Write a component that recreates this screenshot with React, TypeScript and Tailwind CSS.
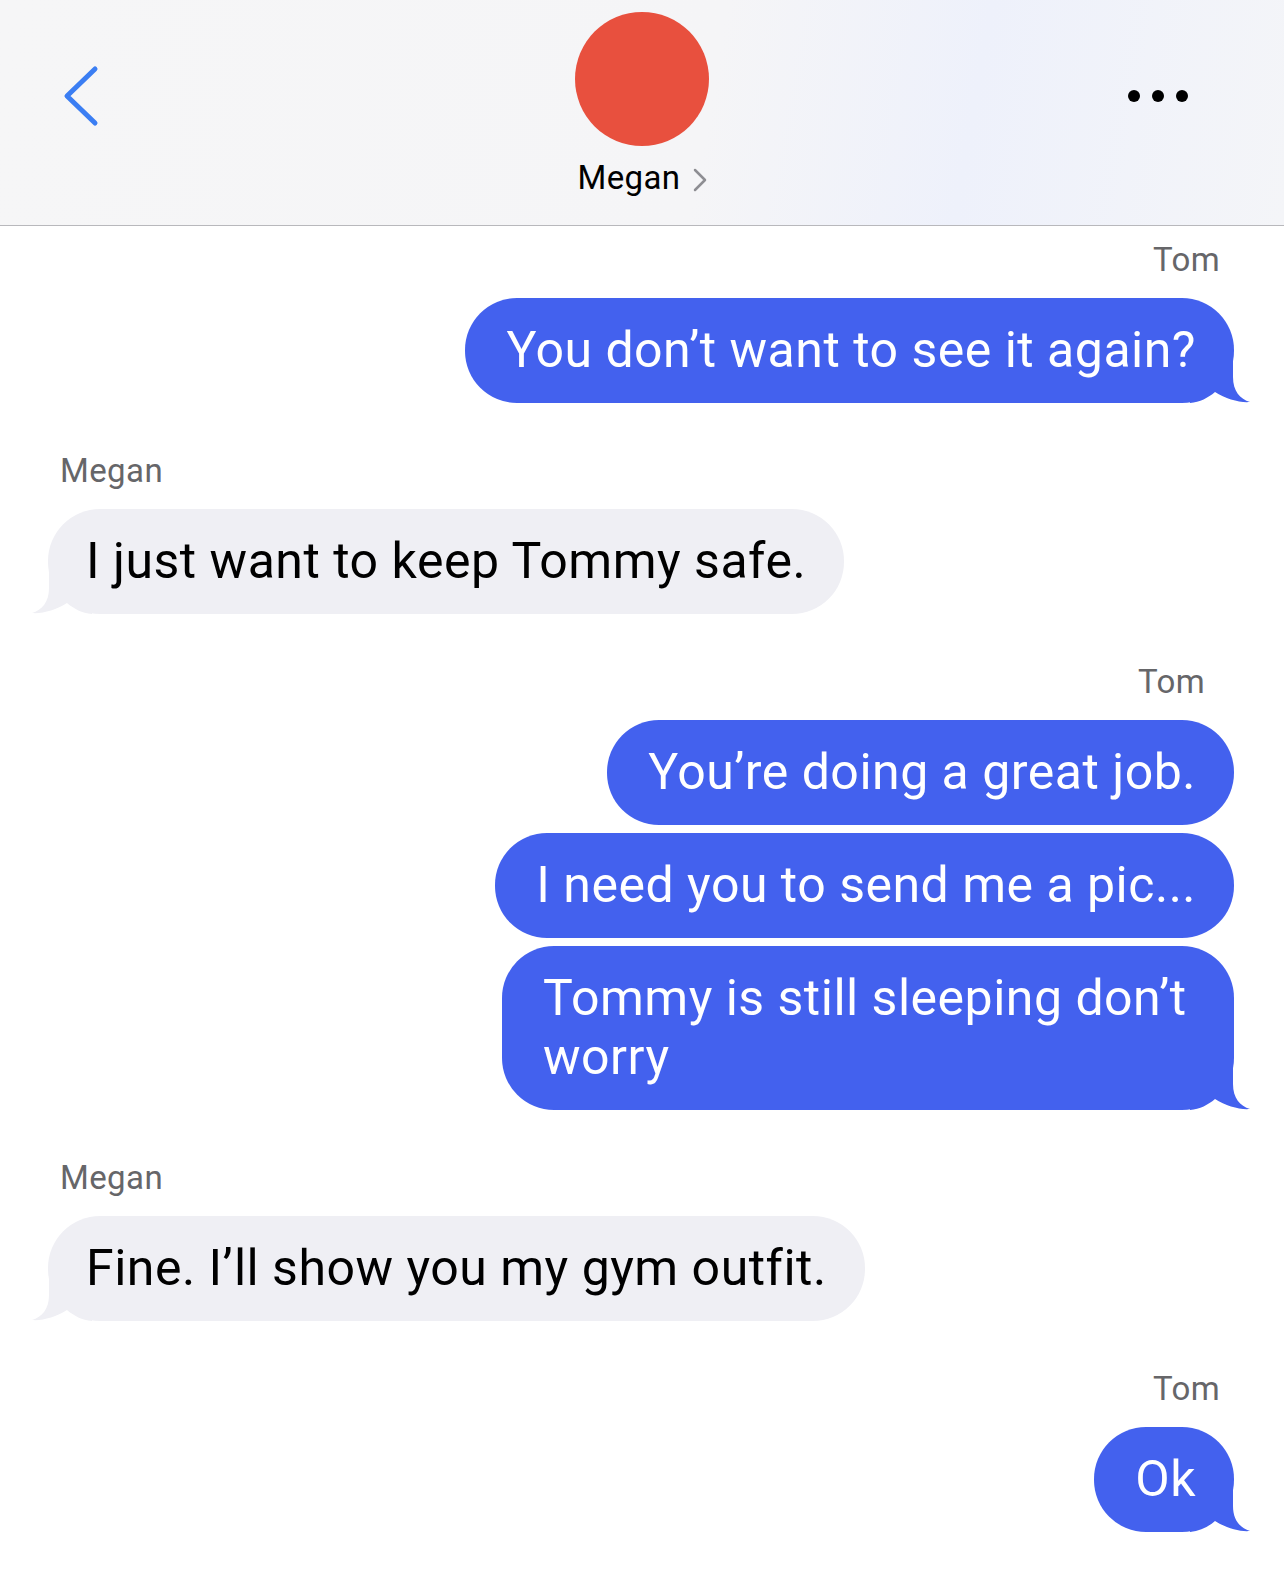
import React from "react";

type Msg = { text: string; width?: string };
type Group = { from: "Tom" | "Megan"; msgs: Msg[]; labelPad?: string };

const groups: Group[] = [
  { from: "Tom", msgs: [{ text: "You don’t want to see it again?" }] },
  { from: "Megan", msgs: [{ text: "I just want to keep Tommy safe." }] },
  {
    from: "Tom",
    labelPad: "pr-[79px]",
    msgs: [
      { text: "You’re doing a great job." },
      { text: "I need you to send me a pic..." },
      { text: "Tommy is still sleeping don’t worry", width: "w-[732px]" },
    ],
  },
  { from: "Megan", msgs: [{ text: "Fine. I’ll show you my gym outfit." }] },
  { from: "Tom", msgs: [{ text: "Ok" }] },
];

// bubble tail, drawn over the lower corner of the last bubble in a group
const Tail = ({ side, color }: { side: "left" | "right"; color: string }) => (
  <svg
    width="60"
    height="50"
    viewBox="0 0 60 50"
    className={
      side === "right"
        ? "absolute bottom-0 right-[-16px]"
        : "absolute bottom-0 left-[-16px] -scale-x-100"
    }
  >
    <path
      d="M43 0 V24 C43 38 50 46 60 49 C50 50 36 46 25 39 C18 45 10 49 0 50 V0 Z"
      fill={color}
    />
  </svg>
);

const Bubble = ({ msg, sent, last }: { msg: Msg; sent: boolean; last: boolean }) => (
  <div
    className={
      "relative max-w-[830px] rounded-[52px] py-[23px] text-[50px] leading-[59px] tracking-[0.5px] " +
      (msg.width ?? "") +
      " " +
      (sent
        ? "bg-[#4361ee] text-white pl-[41px] pr-[38px]"
        : "bg-[#efeff4] text-black pl-[38px] pr-[38px]")
    }
  >
    {last && <Tail side={sent ? "right" : "left"} color={sent ? "#4361ee" : "#efeff4"} />}
    <span className="relative">{msg.text}</span>
  </div>
);

export default function App() {
  return (
    <div
      className="w-[1284px] min-h-[1569px] bg-white overflow-hidden"
      style={{ fontFamily: "Roboto, 'Liberation Sans', sans-serif" }}
    >
      <header className="h-[226px] border-b border-[#b8b8bc] bg-[linear-gradient(100deg,#f6f6f7_0%,#f5f5f7_55%,#eef1fb_75%,#f4f5f8_100%)]">
        <div className="grid h-full grid-cols-[1fr_auto_1fr] items-start px-[62px]">
          <svg width="40" height="64" viewBox="0 0 40 64" className="mt-[64px]">
            <polyline
              points="33,5 5,32 33,59"
              fill="none"
              stroke="#3b7ef3"
              strokeWidth="5"
              strokeLinecap="round"
              strokeLinejoin="round"
            />
          </svg>
          <div className="flex flex-col items-center pt-[12px]">
            <div className="h-[134px] w-[134px] rounded-full bg-[#e8503e]" />
            <div className="mt-[12px] flex items-center gap-[12px] text-[33px] leading-[40px] tracking-[0.4px] text-black">
              <span>Megan</span>
              <svg width="14" height="24" viewBox="0 0 14 24" className="mt-[3px]">
                <polyline
                  points="2,2 12,12 2,22"
                  fill="none"
                  stroke="#8e8e93"
                  strokeWidth="2.5"
                  strokeLinecap="round"
                  strokeLinejoin="round"
                />
              </svg>
            </div>
          </div>
          <div className="mt-[90px] flex justify-end gap-[12px] pr-[34px]">
            <span className="h-[12px] w-[12px] rounded-full bg-black" />
            <span className="h-[12px] w-[12px] rounded-full bg-black" />
            <span className="h-[12px] w-[12px] rounded-full bg-black" />
          </div>
        </div>
      </header>

      <main className="flex flex-col gap-[48px] pt-[14px]">
        {groups.map((g, gi) => {
          const sent = g.from === "Tom";
          return (
            <section key={gi} className={"flex flex-col " + (sent ? "items-end" : "items-start")}>
              <div
                className={
                  "mb-[18px] h-[40px] text-[33px] leading-[40px] tracking-[0.4px] text-[#666669] " +
                  (sent ? g.labelPad ?? "pr-[64px]" : "pl-[60px]")
                }
              >
                {g.from}
              </div>
              <div
                className={
                  "flex flex-col gap-[8px] " + (sent ? "items-end pr-[50px]" : "items-start pl-[48px]")
                }
              >
                {g.msgs.map((m, mi) => (
                  <Bubble key={mi} msg={m} sent={sent} last={mi === g.msgs.length - 1} />
                ))}
              </div>
            </section>
          );
        })}
      </main>
    </div>
  );
}
